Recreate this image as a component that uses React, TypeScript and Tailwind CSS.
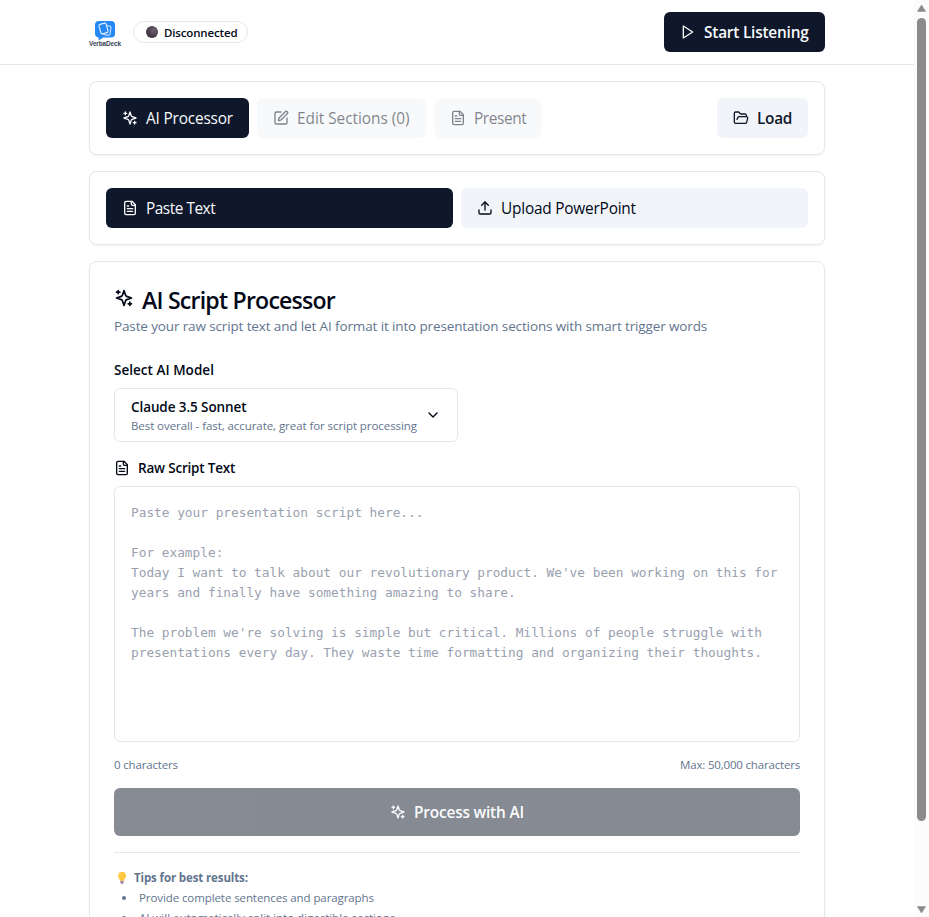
import type { ReactNode } from "react";
import { ChevronDown, FolderOpen, SquarePen, Upload } from "lucide-react";

const tips = [
  { text: "Provide complete sentences and paragraphs", cls: "tracking-[-0.09px]" },
  { text: "AI will automatically split into digestible sections", cls: "tracking-[-0.01px]" },
];

const placeholder = `Paste your presentation script here...

For example:
Today I want to talk about our revolutionary product. We've been working on this for years and finally have something amazing to share.

The problem we're solving is simple but critical. Millions of people struggle with presentations every day. They waste time formatting and organizing their thoughts.`;

function Icon({ className = "h-4 w-4", children }: { className?: string; children: ReactNode }) {
  return (
    <svg
      className={`shrink-0 ${className}`}
      viewBox="0 0 24 24"
      fill="none"
      stroke="currentColor"
      strokeWidth="2"
      strokeLinecap="round"
      strokeLinejoin="round"
    >
      {children}
    </svg>
  );
}

function Sparkles({ className }: { className?: string }) {
  return (
    <Icon className={className}>
      <path d="m12 3-1.912 5.813a2 2 0 0 1-1.275 1.275L3 12l5.813 1.912a2 2 0 0 1 1.275 1.275L12 21l1.912-5.813a2 2 0 0 1 1.275-1.275L21 12l-5.813-1.912a2 2 0 0 1-1.275-1.275L12 3Z" />
      <path d="M5 3v4M19 17v4M3 5h4M17 19h4" />
    </Icon>
  );
}

function FileText() {
  return (
    <Icon>
      <path d="M15 2H6a2 2 0 0 0-2 2v16a2 2 0 0 0 2 2h12a2 2 0 0 0 2-2V7Z" />
      <path d="M14 2v4a2 2 0 0 0 2 2h4M10 9H8M16 13H8M16 17H8" />
    </Icon>
  );
}

function Play() {
  return (
    <Icon>
      <path d="m5 3 14 9-14 9Z" />
    </Icon>
  );
}

function Logo() {
  return (
    <div className="flex h-8 w-8 flex-col items-center pt-[4.5px]">
      <svg className="h-5 w-5 shrink-0" viewBox="0 0 20 20" fill="none">
        <path d="M4 0h12a4 4 0 0 1 4 4v8.5a4 4 0 0 1-4 4H8.2L3.6 19.6v-3.1A4 4 0 0 1 0 12.5V4a4 4 0 0 1 4-4Z" fill="#2588f5" />
        <rect x="8.6" y="4.6" width="7" height="9.4" rx="1.6" transform="rotate(8 12 9)" stroke="#d6e9ff" strokeWidth="1" />
        <rect x="4.8" y="2.6" width="7.4" height="9.8" rx="1.6" transform="rotate(-16 8.5 7.5)" fill="#2588f5" stroke="#eaf4ff" strokeWidth="1.1" />
      </svg>
      <span className="font-['Liberation_Sans',sans-serif] text-[6.4px] leading-[6px] font-bold tracking-[-0.1px] text-gray-700">VerbaDeck</span>
    </div>
  );
}

function Bulb() {
  return (
    <svg className="h-3.5 w-3.5" viewBox="0 0 14 14">
      <path d="M7 .8a4 4 0 0 0-4 4c0 2 1.5 2.6 2 5h4c.5-2.4 2-3 2-5a4 4 0 0 0-4-4Z" fill="#fdc63f" />
      <path d="M5.6 2.4a2.4 2.4 0 0 0-1.2 2.2" stroke="#ffe9a3" strokeWidth="1" fill="none" />
      <path d="M5.2 9.8h3.6v1.8L7.8 13H6.2l-1-1.4Z" fill="#a98fa5" />
    </svg>
  );
}

function Label({ children }: { children: ReactNode }) {
  return <span className="pt-0.5">{children}</span>;
}

function Panel({ children, className }: { children: ReactNode; className: string }) {
  return <section className={`rounded-lg border border-slate-200 bg-white shadow-xs ${className}`}>{children}</section>;
}

export default function App() {
  return (
    <div className="flex h-[917px] w-[929px] overflow-hidden bg-white font-['Open_Sans','Noto_Sans',sans-serif] text-[#020817]">
      <div className="flex min-w-0 flex-1 flex-col">
        <header className="flex h-[65px] shrink-0 items-center justify-between border-b border-slate-200 px-[89px]">
          <div className="flex items-center gap-3">
            <Logo />
            <div className="flex h-[22px] items-center gap-[6px] rounded-full border border-slate-200 px-[10px] pl-3">
              <span className="h-3 w-3 rounded-full bg-[radial-gradient(circle_at_65%_35%,#6b6070,#3c3342_70%)]" />
              <span className="pt-0.5 text-[11.5px] leading-4 font-semibold tracking-[-0.15px]">Disconnected</span>
            </div>
          </div>
          <button className="flex h-10 w-[161px] items-center gap-2 rounded-md bg-[#0f172a] pl-4 text-[15.4px] font-semibold tracking-[-0.21px] text-slate-50">
            <Play />
            <Label>Start Listening</Label>
          </button>
        </header>

        <main className="flex flex-col gap-4 px-[89px] pt-4">
          <Panel className="flex items-center gap-2 p-4">
            <button className="flex h-10 w-[143px] items-center gap-2 rounded-md bg-[#0f172a] pl-4 text-[15.4px] tracking-[-0.18px] text-slate-50">
              <Sparkles />
              <Label>AI Processor</Label>
            </button>
            <button className="flex h-10 w-[169px] items-center gap-2 rounded-md bg-slate-100 pl-4 text-[15.4px] tracking-[-0.03px] opacity-50">
              <SquarePen className="h-4 w-4" />
              <Label>Edit Sections (0)</Label>
            </button>
            <button className="flex h-10 w-[108px] items-center gap-2 rounded-md bg-slate-100 pl-4 text-[15.4px] tracking-[-0.4px] opacity-50">
              <FileText />
              <Label>Present</Label>
            </button>
            <button className="ml-auto flex h-10 w-[91px] items-center gap-2 rounded-md bg-slate-100 pl-4 text-[15.4px] font-semibold tracking-[-0.3px] text-[#0f172a]">
              <FolderOpen className="h-4 w-4" />
              <Label>Load</Label>
            </button>
          </Panel>

          <Panel className="flex gap-2 p-4">
            <button className="flex h-10 flex-1 items-center gap-2 rounded-md bg-[#0f172a] px-4 text-[15.4px] tracking-[-0.48px] text-slate-50">
              <FileText />
              <Label>Paste Text</Label>
            </button>
            <button className="flex h-10 flex-1 items-center gap-2 rounded-md bg-slate-100 px-4 text-[15.4px] tracking-[-0.21px]">
              <Upload className="h-4 w-4" />
              <Label>Upload PowerPoint</Label>
            </button>
          </Panel>

          <Panel className="flex h-[700px] flex-col px-6 pt-6">
            <h1 className="flex h-[30px] items-start gap-2 pt-0.5 text-[23.1px] leading-6 font-semibold tracking-[-0.79px]">
              <Sparkles className="h-5 w-5" />
              AI Script Processor
            </h1>
            <p className="text-[13.5px] leading-5 tracking-[-0.13px] text-slate-500">
              Paste your raw script text and let AI format it into presentation sections with smart trigger words
            </p>

            <label className="mt-6 text-[13.5px] leading-5 font-semibold tracking-[0.03px]">Select AI Model</label>
            <div className="mt-2 flex h-[54px] w-[344px] shrink-0 items-center justify-between rounded-md border border-slate-200 px-4">
              <div className="flex flex-col">
                <span className="text-[13.5px] leading-5 font-semibold tracking-[-0.09px]">Claude 3.5 Sonnet</span>
                <span className="-mb-px pt-px text-[11.5px] leading-4 tracking-[-0.067px] text-slate-500">
                  Best overall - fast, accurate, great for script processing
                </span>
              </div>
              <ChevronDown className="h-4 w-4" />
            </div>

            <label className="mt-4 flex items-center gap-2 text-[13.5px] leading-5 font-semibold tracking-[-0.2px]">
              <FileText />
              Raw Script Text
            </label>
            <textarea
              className="mt-2 h-64 w-full shrink-0 resize-none rounded-md border border-slate-200 px-4 py-4 font-['DejaVu_Sans_Mono',monospace] text-[12.79px] leading-5 placeholder:text-gray-400"
              placeholder={placeholder}
            />
            <div className="mt-[15px] flex justify-between text-[11.5px] leading-4 text-slate-500">
              <span className="tracking-[-0.17px]">0 characters</span>
              <span className="tracking-[-0.18px]">Max: 50,000 characters</span>
            </div>
            <button className="mt-[15px] flex h-12 shrink-0 items-center justify-center gap-2 rounded-md bg-[#0f172a] text-[15.4px] font-semibold tracking-[-0.17px] text-slate-50 opacity-50">
              <Sparkles />
              <Label>Process with AI</Label>
            </button>

            <div className="mt-4 border-t border-slate-200 pt-[17px] text-[11.5px] leading-4 text-slate-500">
              <p className="flex items-center gap-[5px] pl-px font-bold tracking-[-0.12px]">
                <Bulb />
                Tips for best results:
              </p>
              <ul className="mt-1 flex flex-col gap-1">
                {tips.map((t) => (
                  <li key={t.text} className={`flex items-center gap-[13px] pl-2 ${t.cls}`}>
                    <span className="h-1 w-1 rounded-full bg-slate-500" />
                    {t.text}
                  </li>
                ))}
              </ul>
            </div>
          </Panel>
        </main>
      </div>

      <div className="flex w-[15px] shrink-0 flex-col items-center bg-[#fcfcfc]">
        <svg className="mt-[4px] h-2 w-[9px] shrink-0" viewBox="0 0 9 8">
          <path d="M4.5 1 8.6 7.4H.4Z" fill="#8b8b8b" stroke="#8b8b8b" strokeWidth=".6" strokeLinejoin="round" />
        </svg>
        <div className="mt-[6px] h-[803px] w-[9px] shrink-0 rounded-full bg-[#8b8b8b]" />
        <svg className="mt-auto mb-[3px] h-2 w-[9px] shrink-0" viewBox="0 0 9 8">
          <path d="M4.5 7 8.6.6H.4Z" fill="#8b8b8b" stroke="#8b8b8b" strokeWidth=".6" strokeLinejoin="round" />
        </svg>
      </div>
    </div>
  );
}
